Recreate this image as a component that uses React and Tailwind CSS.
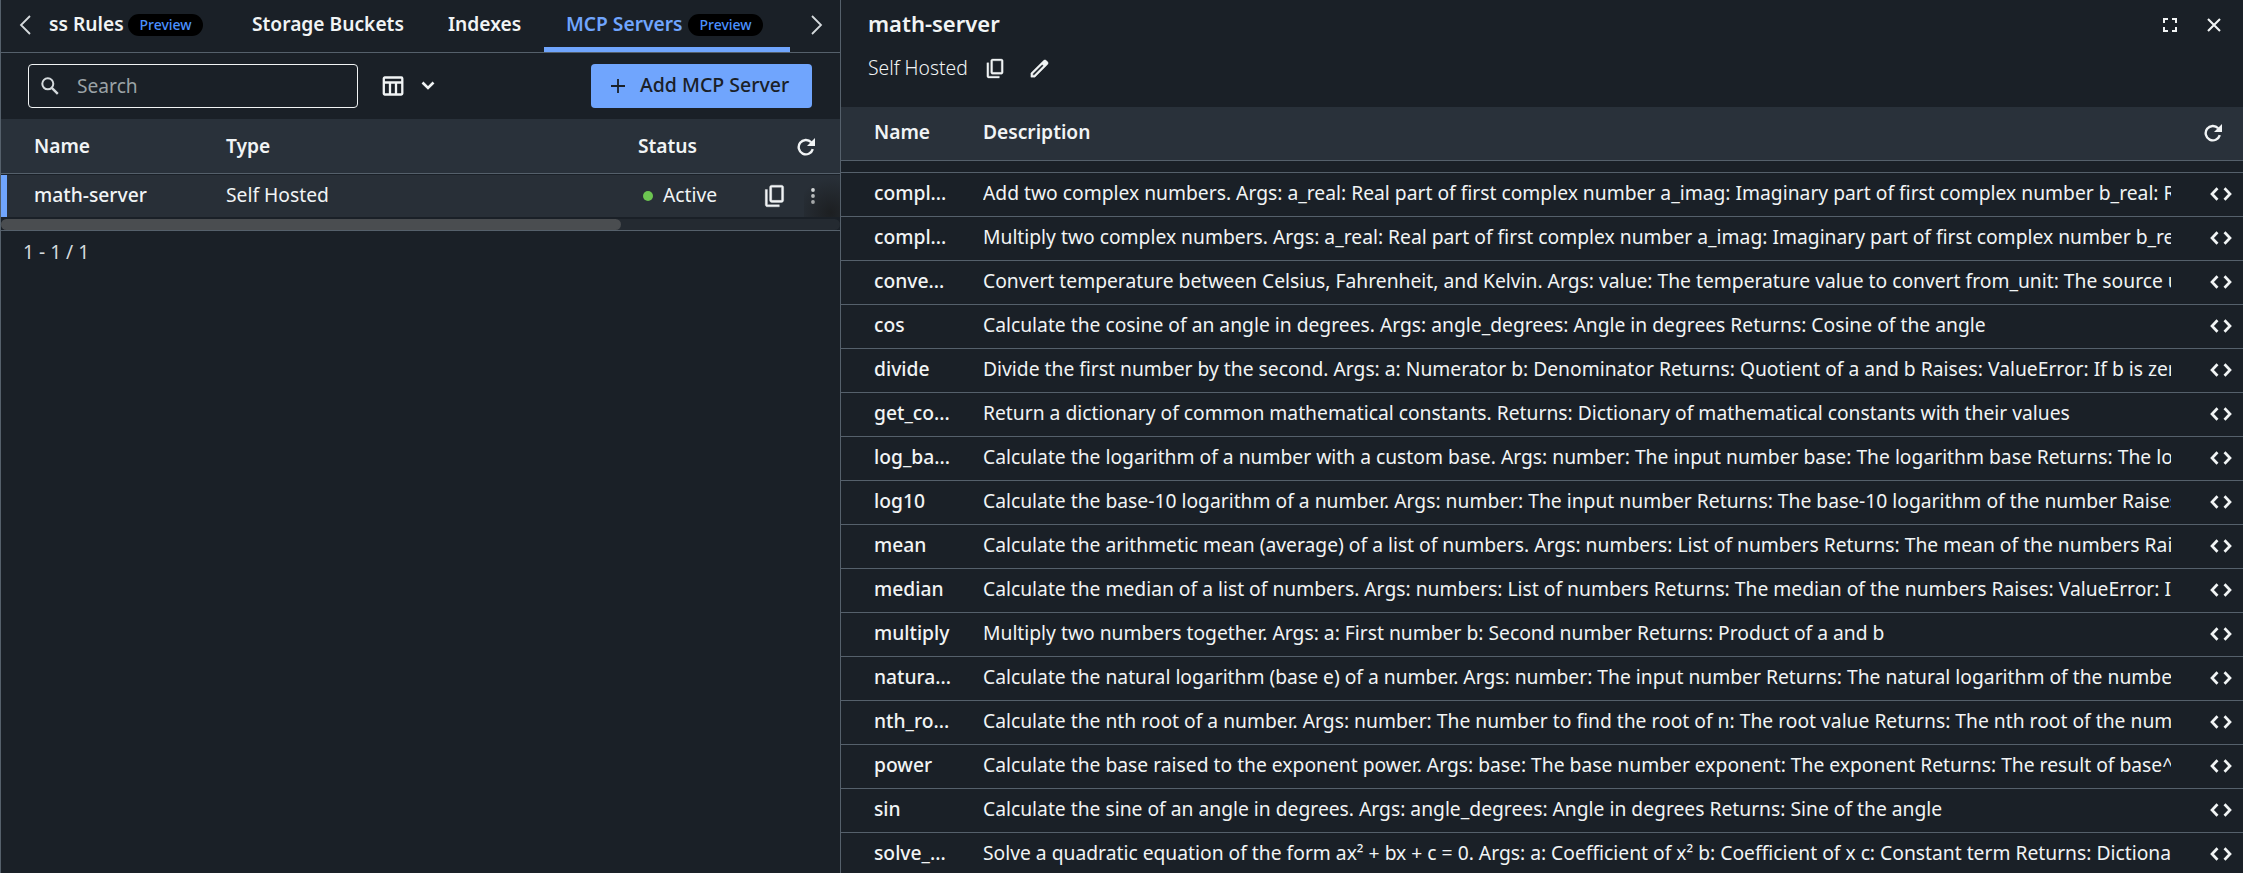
import React from "react";

const LINE = "border-[#55606b]";

function CopyIcon({ className }) {
  return (
    <svg viewBox="0 0 24 24" fill="currentColor" className={className}>
      <path d="M9 18q-.825 0-1.412-.587T7 16V4q0-.825.588-1.412T9 2h9q.825 0 1.413.588T20 4v12q0 .825-.587 1.413T18 18zm0-2h9V4H9zm-4 6q-.825 0-1.412-.587T3 20V6h2v14h11v2z" stroke="currentColor" strokeWidth="0.3" />
    </svg>
  );
}

function RefreshIcon({ className }) {
  return (
    <svg viewBox="0 0 18 18" fill="none" className={className}>
      <path d="M15.8 11.2A7.2 7.2 0 1 1 14.2 4.3" stroke="currentColor" strokeWidth="2.4" />
      <path d="M18 0v8h-8z" fill="currentColor" />
    </svg>
  );
}

function CodeIcon() {
  return (
    <svg viewBox="0 0 22 14" fill="none" className="h-[14px] w-[22px]">
      <path d="M7.5 1.2 2 7l5.5 5.8M14.5 1.2 20 7l-5.5 5.8" stroke="currentColor" strokeWidth="2.7" />
    </svg>
  );
}

function Badge() {
  return (
    <span className="flex h-[22px] items-center rounded-full bg-black px-[11.5px] text-[14px] font-medium leading-none text-[#4a90ff]">
      Preview
    </span>
  );
}

const tools = [
  ["compl...", "Add two complex numbers. Args: a_real: Real part of first complex number a_imag: Imaginary part of first complex number b_real: Real part"],
  ["compl...", "Multiply two complex numbers. Args: a_real: Real part of first complex number a_imag: Imaginary part of first complex number b_real: Real"],
  ["conve...", "Convert temperature between Celsius, Fahrenheit, and Kelvin. Args: value: The temperature value to convert from_unit: The source unit"],
  ["cos", "Calculate the cosine of an angle in degrees. Args: angle_degrees: Angle in degrees Returns: Cosine of the angle"],
  ["divide", "Divide the first number by the second. Args: a: Numerator b: Denominator Returns: Quotient of a and b Raises: ValueError: If b is zero"],
  ["get_co...", "Return a dictionary of common mathematical constants. Returns: Dictionary of mathematical constants with their values"],
  ["log_ba...", "Calculate the logarithm of a number with a custom base. Args: number: The input number base: The logarithm base Returns: The logarithm"],
  ["log10", "Calculate the base-10 logarithm of a number. Args: number: The input number Returns: The base-10 logarithm of the number Raises:"],
  ["mean", "Calculate the arithmetic mean (average) of a list of numbers. Args: numbers: List of numbers Returns: The mean of the numbers Raises:"],
  ["median", "Calculate the median of a list of numbers. Args: numbers: List of numbers Returns: The median of the numbers Raises: ValueError: If the"],
  ["multiply", "Multiply two numbers together. Args: a: First number b: Second number Returns: Product of a and b"],
  ["natura...", "Calculate the natural logarithm (base e) of a number. Args: number: The input number Returns: The natural logarithm of the number"],
  ["nth_ro...", "Calculate the nth root of a number. Args: number: The number to find the root of n: The root value Returns: The nth root of the number"],
  ["power", "Calculate the base raised to the exponent power. Args: base: The base number exponent: The exponent Returns: The result of base^exponent"],
  ["sin", "Calculate the sine of an angle in degrees. Args: angle_degrees: Angle in degrees Returns: Sine of the angle"],
  ["solve_...", "Solve a quadratic equation of the form ax² + bx + c = 0. Args: a: Coefficient of x² b: Coefficient of x c: Constant term Returns: Dictionary"],
];

function Tabs() {
  return (
    <nav className={`flex h-[53px] shrink-0 border-b ${LINE} text-[19.2px] font-semibold leading-none`}>
      <div className="flex w-[48px] shrink-0 items-center pl-[18px] pb-[3px]">
        <svg viewBox="0 0 12 20" fill="none" stroke="#d5dadd" strokeWidth="1.8" className="h-5 w-3">
          <path d="M11 1 2 10l9 9" />
        </svg>
      </div>
      <div className="flex w-[203px] items-center pb-[3px]">
        <span className="w-[79px] whitespace-nowrap pb-[2px]">ss Rules</span>
        <Badge />
      </div>
      <div className="flex w-[196px] items-center whitespace-nowrap pb-[5px]">Storage Buckets</div>
      <div className="flex w-[96px] items-center pb-[5px]">Indexes</div>
      <div className="flex w-[246px] items-center border-b-[5px] border-[#70a5fd] pl-[22px] pt-[2px] text-[#70a5fd]">
        <span className="w-[122px] whitespace-nowrap pb-[2px]">MCP Servers</span>
        <Badge />
      </div>
      <div className="flex items-center pb-[3px] pl-[21px]">
        <svg viewBox="0 0 12 20" fill="none" stroke="#d5dadd" strokeWidth="1.8" className="h-5 w-3">
          <path d="m1 1 9 9-9 9" />
        </svg>
      </div>
    </nav>
  );
}

function Toolbar() {
  return (
    <div className="flex h-[66px] shrink-0 items-center pl-[27px] pr-[28px]">
      <div className="flex h-[44px] w-[330px] items-center rounded-[4px] border border-[#f1f4f5] pl-[12px] text-[19.2px]">
        <svg viewBox="0 0 18 18" fill="none" stroke="#d5dadd" strokeWidth="2" className="h-[18px] w-[18px]">
          <circle cx="6.8" cy="6.8" r="5.5" />
          <path d="m10.8 10.8 6 6" strokeWidth="2.4" />
        </svg>
        <span className="pl-[18px] text-[#9ba3a6]">Search</span>
      </div>
      <svg viewBox="0 0 22 20" fill="none" stroke="currentColor" strokeWidth="2.3" className="mb-px ml-[24px] h-[20px] w-[22px]">
        <rect x="1.8" y="1.5" width="18.5" height="17" rx="1" />
        <path d="M1.8 6.5h18.5M8 6.5v12M14 6.5v12" />
      </svg>
      <svg viewBox="0 0 14 9" fill="none" stroke="currentColor" strokeWidth="2.6" className="mb-px ml-[17px] h-[9px] w-[14px]">
        <path d="m1.5 1.5 5.5 5.5 5.5-5.5" />
      </svg>
      <button className="ml-auto flex h-[44px] w-[221px] items-center rounded-[4px] bg-[#70a5fd] pl-[20px] text-[19.5px] font-medium text-[#1a2027]">
        <svg viewBox="0 0 14 14" stroke="currentColor" strokeWidth="1.8" className="h-[14px] w-[14px]">
          <path d="M7 0v14M0 7h14" />
        </svg>
        <span className="whitespace-nowrap pb-[2px] pl-[15px]">Add MCP Server</span>
      </button>
    </div>
  );
}

function Servers() {
  return (
    <section className={`flex w-[841px] shrink-0 flex-col border-x ${LINE}`}>
      <Tabs />
      <Toolbar />
      <div className={`flex h-[55px] shrink-0 items-center border-b ${LINE} bg-[#29313a] pl-[33px] text-[19.2px] font-semibold`}>
        <span className="w-[192px]">Name</span>
        <span className="w-[412px]">Type</span>
        <span className="w-[159px]">Status</span>
        <RefreshIcon className="mt-px h-[18px] w-[18px]" />
      </div>
      <div className="relative mt-px flex h-[42px] shrink-0 items-center border-l-[6px] border-[#70a5fd] bg-[#282f37] pl-[27px] text-[19.28px]">
        <span className="w-[192px] pb-[2px] font-medium">math-server</span>
        <span className="w-[417px] pb-[2px]">Self Hosted</span>
        <span className="h-[10px] w-[10px] rounded-full bg-[#6cc551]" />
        <span className="w-[109px] pb-[2px] pl-[10px]">Active</span>
        <CopyIcon className="h-[26px] w-[26px]" />
        <svg viewBox="0 0 4 16" fill="currentColor" className="ml-[23px] h-4 w-1">
          <circle cx="2" cy="2" r="1.9" />
          <circle cx="2" cy="8" r="1.9" />
          <circle cx="2" cy="14" r="1.9" />
        </svg>
        <div className="absolute bottom-0 right-0 h-full w-[36px] bg-[radial-gradient(circle_at_75%_90%,rgba(27,29,31,0.9),transparent_75%)]" />
      </div>
      <div className={`mt-px h-[13px] shrink-0 border-b ${LINE} pt-px`}>
        <div className="h-[11px] rounded-full bg-[#242a31]">
          <div className="h-[11px] w-[620px] rounded-full bg-[#4a4d50]" />
        </div>
      </div>
      <div className="pl-[22px] pt-[7px] text-[19.2px] leading-[28px] text-[#d5dadd]">1 - 1 / 1</div>
    </section>
  );
}

function Details() {
  return (
    <section className="flex min-w-0 flex-1 flex-col">
      <header className="flex h-[107px] shrink-0 flex-col pl-[27px] pr-[22px]">
        <div className="flex h-[50px] items-center">
          <h1 className="pb-[3px] text-[22px] font-semibold">math-server</h1>
          <svg viewBox="0 0 14 14" fill="none" stroke="currentColor" strokeWidth="2" className="ml-auto h-[14px] w-[14px]">
            <path d="M1 5V1h4M9 1h4v4M13 9v4H9M5 13H1V9" />
          </svg>
          <svg viewBox="0 0 14 14" fill="none" stroke="currentColor" strokeWidth="2.1" className="ml-[30px] h-[14px] w-[14px]">
            <path d="m1 1 12 12M13 1 1 13" />
          </svg>
        </div>
        <div className="flex h-[37px] items-center">
          <span className="w-[116px] pb-px text-[19.28px] font-light">Self Hosted</span>
          <CopyIcon className="h-[23px] w-[23px]" />
          <svg viewBox="0 0 24 24" fill="currentColor" stroke="currentColor" strokeWidth="0.4" className="ml-[21px] h-[23px] w-[23px]">
            <path d="M5 19h1.425L16.2 9.225L14.775 7.8L5 17.575zm-2 2v-4.25L16.2 3.575q.3-.275.663-.425t.762-.15t.775.15t.65.45L20.425 5q.3.275.438.65T21 6.4q0 .4-.137.763t-.438.662L7.25 21z" />
          </svg>
        </div>
      </header>
      <div className={`flex h-[54px] shrink-0 items-center border-b ${LINE} bg-[#29313a] pb-[2px] pl-[33px] pr-[21px] text-[19.2px] font-semibold`}>
        <span className="w-[109px] pb-px">Name</span>
        <span className="pb-px">Description</span>
        <RefreshIcon className="ml-auto h-[18px] w-[18px]" />
      </div>
      <div className={`h-[12px] shrink-0 border-b ${LINE}`} />
      {tools.map(([name, text], i) => (
        <div key={i} className={`flex h-[44px] shrink-0 items-center border-b ${LINE} pb-px pl-[33px] pr-[11px] text-[19.28px]`}>
          <span className="w-[109px] shrink-0 whitespace-nowrap pb-px font-medium">{name}</span>
          <span className="w-[1188px] shrink-0 overflow-hidden whitespace-nowrap pb-px">{text}</span>
          <span className="ml-auto"><CodeIcon /></span>
        </div>
      ))}
    </section>
  );
}

export default function App() {
  return (
    <main className="flex h-[873px] w-[2243px] overflow-hidden bg-[#1a2027] font-['Noto_Sans',sans-serif] text-[#f1f4f5]">
      <Servers />
      <Details />
    </main>
  );
}
